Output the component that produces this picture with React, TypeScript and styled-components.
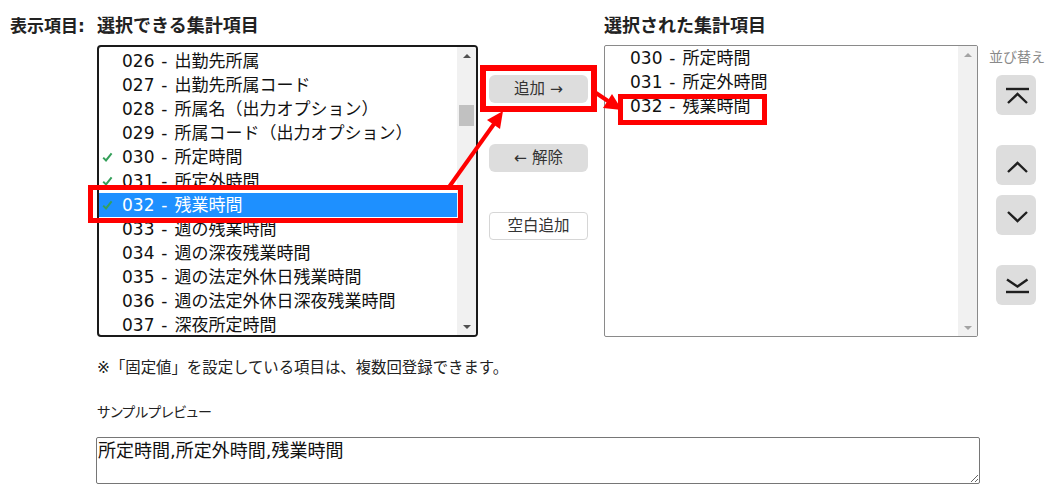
import React from "react";
import styled, { createGlobalStyle } from "styled-components";

const GlobalStyle = createGlobalStyle`
  html, body { margin: 0; padding: 0; background: #fff; }
  body {
    font-family: "DejaVu Sans", "Noto Sans CJK JP", sans-serif;
    color: #1a1a1a;
  }
`;

const Page = styled.div`
  position: relative;
  width: 1055px;
  height: 501px;
  box-sizing: border-box;
  padding: 13px 0 0 10px;
  display: flex;
  overflow: hidden;
`;

const SideLabel = styled.div`
  width: 87px;
  flex: none;
  font-size: 17px;
  font-weight: 700;
  line-height: 26px;
  color: #222;
`;

const Content = styled.div`
  display: flex;
  flex-direction: column;
`;

const Top = styled.div`
  display: grid;
  grid-template-columns: 381px 126px 374px 70px;
  grid-template-rows: 32px 292px;
`;

const Heading = styled.div`
  font-size: 18px;
  font-weight: 700;
  line-height: 26px;
  color: #222;
`;

const ListBox = styled.div<{ $strong?: boolean }>`
  box-sizing: border-box;
  height: 292px;
  display: flex;
  overflow: hidden;
  border: ${(p) => (p.$strong ? "2px solid #1a1a1a" : "1px solid #8a8a8a")};
  border-radius: ${(p) => (p.$strong ? "4px" : "2px")};
  background: #fff;
`;

const Items = styled.div<{ $padTop: number }>`
  flex: 1;
  overflow: hidden;
  padding-top: ${(p) => p.$padTop}px;
`;

const Item = styled.div<{ $selected?: boolean; $indent: number }>`
  height: 24px;
  display: flex;
  align-items: center;
  padding-left: ${(p) => p.$indent}px;
  font-size: 17px;
  line-height: 24px;
  word-spacing: 1.5px;
  white-space: pre;
  color: ${(p) => (p.$selected ? "#fff" : "#111")};
  background: ${(p) => (p.$selected ? "#1e90ff" : "transparent")};
`;

const CheckCell = styled.span`
  width: 20px;
  flex: none;
  display: flex;
  align-items: center;
`;

const Track = styled.div`
  width: 19px;
  flex: none;
  background: #f1f1f1;
  display: flex;
  flex-direction: column;
`;

const ArrowCell = styled.div`
  height: 17px;
  display: flex;
  align-items: center;
  justify-content: center;
`;

const Tri = styled.span<{ $down?: boolean; $dim?: boolean }>`
  width: 0;
  height: 0;
  border-left: 4px solid transparent;
  border-right: 4px solid transparent;
  ${(p) =>
    p.$down
      ? `border-top: 4px solid ${p.$dim ? "#a3a3a3" : "#505050"};`
      : `border-bottom: 4px solid ${p.$dim ? "#a3a3a3" : "#505050"};`}
`;

const Thumb = styled.div<{ $offset: number }>`
  margin: ${(p) => p.$offset}px 2px 0;
  height: 21px;
  background: #c1c1c1;
`;

const Spacer = styled.div`
  flex: 1;
`;

const MidCol = styled.div`
  padding: 30px 0 0 11px;
  display: flex;
  flex-direction: column;
`;

const ActionButton = styled.button<{ $outline?: boolean; $gap: number }>`
  width: 99px;
  height: 28px;
  margin-top: ${(p) => p.$gap}px;
  box-sizing: border-box;
  border: ${(p) => (p.$outline ? "1px solid #d6d6d6" : "none")};
  border-radius: ${(p) => (p.$outline ? "4px" : "6px")};
  background: ${(p) => (p.$outline ? "#fff" : "#dddddd")};
  color: #333;
  font-family: inherit;
  font-size: 15.5px;
  line-height: 26px;
  padding: 0;
  cursor: pointer;
`;

const SortCol = styled.div`
  padding: 2px 0 0 11px;
  display: flex;
  flex-direction: column;
`;

const SortLabel = styled.div`
  font-size: 14px;
  line-height: 20px;
  color: #8a8a8a;
  white-space: nowrap;
`;

const SortButton = styled.button<{ $gap: number }>`
  width: 40px;
  height: 40px;
  margin: ${(p) => p.$gap}px 0 0 7px;
  padding: 0;
  border: none;
  border-radius: 6px;
  background: #dddddd;
  display: flex;
  align-items: center;
  justify-content: center;
  cursor: pointer;
`;

const Note = styled.div`
  margin-top: 20px;
  font-size: 15.4px;
  line-height: 22px;
  color: #222;
`;

const PreviewLabel = styled.div`
  margin-top: 22px;
  font-size: 14px;
  line-height: 22px;
  color: #222;
  font-feature-settings: "palt";
`;

const Preview = styled.textarea`
  margin: 14px 0 0 -1px;
  width: 884px;
  height: 47px;
  box-sizing: border-box;
  border: 1px solid #767676;
  border-radius: 2px;
  padding: 1px 1px;
  font-family: inherit;
  font-size: 18px;
  line-height: 24px;
  color: #111;
  overflow: hidden;
  resize: both;
  outline: none;
`;

const Overlay = styled.svg`
  position: absolute;
  left: 0;
  top: 0;
  pointer-events: none;
`;

type Row = { code: string; name: string; checked?: boolean; selected?: boolean };

const available: Row[] = [
  { code: "026", name: "出勤先所属" },
  { code: "027", name: "出勤先所属コード" },
  { code: "028", name: "所属名（出力オプション）" },
  { code: "029", name: "所属コード（出力オプション）" },
  { code: "030", name: "所定時間", checked: true },
  { code: "031", name: "所定外時間", checked: true },
  { code: "032", name: "残業時間", checked: true, selected: true },
  { code: "033", name: "週の残業時間" },
  { code: "034", name: "週の深夜残業時間" },
  { code: "035", name: "週の法定外休日残業時間" },
  { code: "036", name: "週の法定外休日深夜残業時間" },
  { code: "037", name: "深夜所定時間" },
];

const chosen: Row[] = [
  { code: "030", name: "所定時間" },
  { code: "031", name: "所定外時間" },
  { code: "032", name: "残業時間" },
];

const Check = () => (
  <svg width="11" height="10" viewBox="0 0 11 10">
    <path d="M1.2 5.6 L4 8.4 L9.6 1.4" fill="none" stroke="#35a05a" strokeWidth="2" />
  </svg>
);

const Icon = ({ d, line }: { d: string; line?: number }) => (
  <svg width="40" height="40" viewBox="0 0 40 40">
    {line !== undefined && (
      <line x1="10" x2="33" y1={line} y2={line} stroke="#1f1f1f" strokeWidth="2.4" />
    )}
    <path d={d} fill="none" stroke="#1f1f1f" strokeWidth="2.4" />
  </svg>
);

export default function App() {
  return (
    <>
      <GlobalStyle />
      <Page>
        <SideLabel>表示項目:</SideLabel>
        <Content>
          <Top>
            <Heading>選択できる集計項目</Heading>
            <div />
            <Heading>選択された集計項目</Heading>
            <div />

            <ListBox $strong>
              <Items $padTop={2}>
                {available.map((r) => (
                  <Item key={r.code} $selected={r.selected} $indent={3}>
                    <CheckCell>{r.checked && <Check />}</CheckCell>
                    {`${r.code} - ${r.name}`}
                  </Item>
                ))}
              </Items>
              <Track>
                <ArrowCell>
                  <Tri />
                </ArrowCell>
                <Thumb $offset={41} />
                <Spacer />
                <ArrowCell>
                  <Tri $down />
                </ArrowCell>
              </Track>
            </ListBox>

            <MidCol>
              <ActionButton $gap={0}>追加 →</ActionButton>
              <ActionButton $gap={41}>← 解除</ActionButton>
              <ActionButton $gap={40} $outline>
                空白追加
              </ActionButton>
            </MidCol>

            <ListBox>
              <Items $padTop={0}>
                {chosen.map((r) => (
                  <Item key={r.code} $indent={25}>
                    {`${r.code} - ${r.name}`}
                  </Item>
                ))}
              </Items>
              <Track>
                <ArrowCell>
                  <Tri $dim />
                </ArrowCell>
                <Spacer />
                <ArrowCell>
                  <Tri $down $dim />
                </ArrowCell>
              </Track>
            </ListBox>

            <SortCol>
              <SortLabel>並び替え</SortLabel>
              <SortButton $gap={8} aria-label="先頭へ">
                <Icon line={14} d="M12 28 L21.5 19 L31 28" />
              </SortButton>
              <SortButton $gap={30} aria-label="上へ">
                <Icon d="M12 27 L21.5 18 L31 27" />
              </SortButton>
              <SortButton $gap={10} aria-label="下へ">
                <Icon d="M12 17 L21.5 26 L31 17" />
              </SortButton>
              <SortButton $gap={30} aria-label="末尾へ">
                <Icon line={27} d="M11 14.5 L21.5 21.5 L31.5 14.5" />
              </SortButton>
            </SortCol>
          </Top>

          <Note>※「固定値」を設定している項目は、複数回登録できます。</Note>
          <PreviewLabel>サンプルプレビュー</PreviewLabel>
          <Preview readOnly value="所定時間,所定外時間,残業時間" />
        </Content>

        <Overlay width="1055" height="501" viewBox="0 0 1055 501">
          <g fill="none" stroke="#ff0000">
            <rect x="90.5" y="187.5" width="370" height="33" strokeWidth="5" />
            <rect x="483" y="68" width="111" height="41" strokeWidth="6" />
            <rect x="620.5" y="96.5" width="144" height="26" strokeWidth="5" />
            <line x1="449" y1="187" x2="494" y2="124" strokeWidth="4" />
            <line x1="596" y1="93" x2="608" y2="101" strokeWidth="4" />
          </g>
          <g fill="#ff0000">
            <polygon points="503,111 500,129 487,120" />
            <polygon points="622,110 603,108 612,94" />
          </g>
        </Overlay>
      </Page>
    </>
  );
}
